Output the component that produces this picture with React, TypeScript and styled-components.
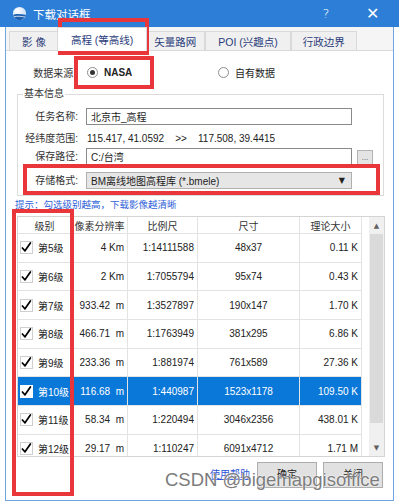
import React from 'react';
import styled, { createGlobalStyle } from 'styled-components';

const GlobalStyle = createGlobalStyle`
  html, body {
    margin: 0;
    padding: 0;
    background: #ffffff;
  }
  body {
    font-family: "Liberation Sans", "Noto Sans CJK SC", sans-serif;
    font-size: 10px;
    color: #1e1e1e;
  }
`;

const Window = styled.div`
  position: relative;
  width: 399px;
  height: 502px;
  display: flex;
  flex-direction: column;
  overflow: hidden;
`;

const TitleBar = styled.div`
  flex: none;
  height: 27px;
  background: #2c7ed6;
  color: #ffffff;
  display: flex;
  align-items: center;
  padding: 0 4px 0 12px;
`;

const Title = styled.span`
  flex: 1;
  margin-left: 6px;
  font-size: 11.5px;
`;

const TitleButton = styled.span<{ $size: number }>`
  width: 46px;
  text-align: center;
  font-size: ${({ $size }) => $size}px;
  font-family: "DejaVu Sans", sans-serif;
  font-weight: 300;
`;

const Frame = styled.div`
  flex: 1;
  margin: 0 5px 1px;
  border: 1px solid #6ea6e2;
  border-top: none;
  background: #ffffff;
  display: flex;
  flex-direction: column;
`;

const TabStrip = styled.div`
  flex: none;
  height: 23px;
  background: #f5f5f5;
  display: flex;
  align-items: flex-end;
  padding-left: 3px;
`;

const Tab = styled.div<{ $active?: boolean; $pad: number }>`
  position: relative;
  height: ${({ $active }) => ($active ? 24 : 20)}px;
  margin: 0 ${({ $active }) => ($active ? -2 : 0)}px -1px;
  z-index: ${({ $active }) => ($active ? 1 : 0)};
  padding: 0 ${({ $pad }) => $pad}px;
  display: flex;
  align-items: center;
  box-sizing: border-box;
  background: ${({ $active }) => ($active ? '#ffffff' : '#f0f0f0')};
  border: 1px solid #d9d9d9;
  border-bottom: ${({ $active }) => ($active ? 'none' : '1px solid #d9d9d9')};
  color: #2a3c7a;
  font-size: 10.5px;
  white-space: pre;
`;

const Panel = styled.div`
  flex: 1;
  background: #ffffff;
  border-top: 1px solid #d9d9d9;
  display: flex;
  flex-direction: column;
`;

const SourceRow = styled.div`
  margin-top: 11px;
  height: 20px;
  display: grid;
  grid-template-columns: 70px 133px auto;
  align-items: center;
`;

const FieldLabel = styled.span`
  text-align: right;
  color: #333333;
  white-space: nowrap;
`;

const RadioOption = styled.label<{ $indent: number }>`
  display: flex;
  align-items: center;
  gap: 6px;
  margin-left: ${({ $indent }) => $indent}px;
`;

const RadioDot = styled.span<{ $checked?: boolean }>`
  width: 11px;
  height: 11px;
  box-sizing: border-box;
  border-radius: 50%;
  border: 1px solid #8d8d8d;
  background: #ffffff;
  display: flex;
  align-items: center;
  justify-content: center;

  &::after {
    content: '';
    width: 5px;
    height: 5px;
    border-radius: 50%;
    background: ${({ $checked }) => ($checked ? '#333333' : 'transparent')};
  }
`;

const OptionText = styled.span<{ $bold?: boolean }>`
  font-weight: ${({ $bold }) => ($bold ? 700 : 400)};
  color: #222222;
`;

const GroupBox = styled.fieldset`
  margin: 6px 9px 0 11px;
  padding: 8px 0 6px;
  border: 1px solid #dcdcdc;
  min-width: 0;
  display: grid;
  grid-template-columns: 68px 266px 21px;
  grid-template-rows: 17px 23px 17px 24px;
`;

const Legend = styled.legend`
  margin-left: 5px;
  padding: 0 1px;
  font-size: 10px;
  line-height: 12px;
  color: #333333;
`;

const GroupLabel = styled(FieldLabel)<{ $row: number }>`
  grid-column: 1;
  grid-row: ${({ $row }) => $row};
  align-self: ${({ $row }) => ($row === 4 ? 'end' : 'center')};
  padding-right: 8px;
  padding-top: ${({ $row }) => ($row === 2 ? 3 : 0)}px;
  line-height: 17px;
`;

const TextBox = styled.div<{ $row: number }>`
  grid-column: 2;
  grid-row: ${({ $row }) => $row};
  height: 17px;
  box-sizing: border-box;
  border: 1px solid #8a8a8a;
  background: #ffffff;
  padding: 0 4px;
  display: flex;
  align-items: center;
`;

const RangeText = styled.div`
  grid-column: 2 / 4;
  grid-row: 2;
  align-self: center;
  padding-top: 3px;
  padding-left: 1px;
  color: #222222;
  white-space: pre;
`;

const BrowseButton = styled.div`
  grid-column: 3;
  grid-row: 3;
  margin-left: 5px;
  margin-top: 2px;
  height: 15px;
  box-sizing: border-box;
  border: 1px solid #b4b4b4;
  background: #e4e4e4;
  color: #555555;
  font-size: 8px;
  display: flex;
  align-items: center;
  justify-content: center;
`;

const SelectBox = styled.div`
  grid-column: 2;
  grid-row: 4;
  align-self: end;
  height: 17px;
  box-sizing: border-box;
  border: 1px solid #b0b0b0;
  background: #e6e6e6;
  padding: 0 6px 0 4px;
  display: flex;
  align-items: center;
  justify-content: space-between;
  color: #222222;
`;

const SelectArrow = styled.span`
  font-size: 8px;
  font-family: "DejaVu Sans", sans-serif;
`;

const Hint = styled.div`
  margin: 3px 0 0 9px;
  line-height: 12px;
  font-size: 9.5px;
  color: #2f62d8;
`;

const TableFrame = styled.div`
  margin: 5px 0 0 11px;
  width: 368px;
  height: 241px;
  box-sizing: border-box;
  border: 1px solid #d4d4d4;
  display: flex;
`;

const TableView = styled.div`
  flex: 1;
  overflow: hidden;
`;

const GridRow = styled.div<{ $height: number; $selected?: boolean }>`
  display: grid;
  grid-template-columns: 54px 56px 70px 102px 62px;
  width: 344px;
  height: ${({ $height }) => $height}px;
  background: ${({ $selected }) => ($selected ? '#0a78d8' : '#ffffff')};
  color: ${({ $selected }) => ($selected ? '#ffffff' : '#222222')};
`;

const Cell = styled.div<{ $align: 'left' | 'center' | 'right'; $header?: boolean }>`
  display: flex;
  align-items: center;
  justify-content: ${({ $align }) =>
    $align === 'left' ? 'flex-start' : $align === 'right' ? 'flex-end' : 'center'};
  padding: 0 ${({ $align }) => ($align === 'right' ? 3 : 0)}px 0 ${({ $align }) => ($align === 'left' ? 2 : 0)}px;
  border-right: 1px solid #e3e3e3;
  border-bottom: 1px solid #e3e3e3;
  color: ${({ $header }) => ($header ? '#333333' : 'inherit')};
  white-space: pre;
  overflow: hidden;
`;

const LevelText = styled.span`
  margin-left: 5px;
`;

const ScrollBar = styled.div`
  width: 15px;
  background: #f0f0f0;
  display: flex;
  flex-direction: column;
  align-items: stretch;
`;

const ScrollArrow = styled.div`
  height: 17px;
  display: flex;
  align-items: center;
  justify-content: center;
  color: #606060;
  font-size: 7px;
  font-family: "DejaVu Sans", sans-serif;
`;

const ScrollThumb = styled.div`
  flex: 1;
  margin: 0 1px;
  background: #dadada;
`;

const ScrollTrack = styled.div`
  height: 16px;
`;

const Footer = styled.div`
  margin: 5px 10px 0 0;
  height: 27px;
  display: flex;
  justify-content: flex-end;
  align-items: flex-start;
`;

const HelpLink = styled.span`
  margin: 4px 7px 0 0;
  color: #2b52d6;
  text-decoration: underline;
`;

const DialogButton = styled.div<{ $gap: number }>`
  width: 60px;
  height: 26px;
  box-sizing: border-box;
  margin-left: ${({ $gap }) => $gap}px;
  border: 1px solid #adadad;
  background: #e1e1e1;
  display: flex;
  justify-content: center;
  padding-top: 3px;
  color: #222222;
`;

const Watermark = styled.div`
  position: absolute;
  left: 165px;
  top: 469px;
  font-family: "Liberation Sans", sans-serif;
  font-size: 18.5px;
  color: #7c7c7c;
  text-shadow: 0 0 2px #ffffff, 0 0 1px #ffffff;
  white-space: nowrap;
`;

const Marker = styled.div<{ $x: number; $y: number; $w: number; $h: number }>`
  position: absolute;
  left: ${({ $x }) => $x}px;
  top: ${({ $y }) => $y}px;
  width: ${({ $w }) => $w}px;
  height: ${({ $h }) => $h}px;
  box-sizing: border-box;
  border: 4px solid #e8363b;
  pointer-events: none;
`;

const AppIcon = () => (
  <svg width="15" height="15" viewBox="0 0 16 16">
    <defs>
      <radialGradient id="g" cx="0.35" cy="0.3" r="0.8">
        <stop offset="0" stopColor="#ffffff" />
        <stop offset="1" stopColor="#bcd8f5" />
      </radialGradient>
    </defs>
    <circle cx="8" cy="8" r="7" fill="url(#g)" />
    <path d="M1.3 9.5 C4 8 10 8.5 14.8 9.6 C14 12.8 11 15 8 15 C4.7 15 2 12.7 1.3 9.5 Z" fill="#1d5fae" />
    <path d="M2 11.5 C5 10.5 10 11 14 11.8" stroke="#ffffff" strokeWidth="0.8" fill="none" />
  </svg>
);

const CheckMark = ({ onBlue }: { onBlue?: boolean }) => (
  <svg width="13" height="13" viewBox="0 0 13 13">
    <rect x="0.5" y="0.5" width="12" height="12" fill="#ffffff" stroke={onBlue ? '#ffffff' : '#cfcfcf'} />
    <path d="M2.4 7 L5 9.8 L10.4 2" stroke="#000000" strokeWidth="1.7" fill="none" strokeLinecap="round" strokeLinejoin="round" />
  </svg>
);

const TABS = [
  { label: '影 像', pad: 12 },
  { label: '高程 (等高线)', pad: 13, active: true },
  { label: '矢量路网', pad: 8 },
  { label: 'POI (兴趣点)', pad: 12 },
  { label: '行政边界', pad: 11 },
];

const LEVELS = [
  { level: '第5级', res: '4 Km', scale: '1:14111588', size: '48x37', bytes: '0.11 K' },
  { level: '第6级', res: '2 Km', scale: '1:7055794', size: '95x74', bytes: '0.43 K' },
  { level: '第7级', res: '933.42  m', scale: '1:3527897', size: '190x147', bytes: '1.70 K' },
  { level: '第8级', res: '466.71  m', scale: '1:1763949', size: '381x295', bytes: '6.86 K' },
  { level: '第9级', res: '233.36  m', scale: '1:881974', size: '761x589', bytes: '27.36 K' },
  { level: '第10级', res: '116.68  m', scale: '1:440987', size: '1523x1178', bytes: '109.50 K', selected: true },
  { level: '第11级', res: '58.34  m', scale: '1:220494', size: '3046x2356', bytes: '438.01 K' },
  { level: '第12级', res: '29.17  m', scale: '1:110247', size: '6091x4712', bytes: '1.71 M' },
];

export default function App() {
  return (
    <>
      <GlobalStyle />
      <Window>
        <TitleBar>
          <AppIcon />
          <Title>下载对话框</Title>
          <TitleButton $size={13}>?</TitleButton>
          <TitleButton $size={16}>✕</TitleButton>
        </TitleBar>

        <Frame>
          <TabStrip>
            {TABS.map((tab) => (
              <Tab key={tab.label} $active={tab.active} $pad={tab.pad}>
                {tab.label}
              </Tab>
            ))}
          </TabStrip>

          <Panel>
            <SourceRow>
              <FieldLabel>数据来源:</FieldLabel>
              <RadioOption $indent={11}>
                <RadioDot $checked />
                <OptionText $bold>NASA</OptionText>
              </RadioOption>
              <RadioOption $indent={9}>
                <RadioDot />
                <OptionText>自有数据</OptionText>
              </RadioOption>
            </SourceRow>

            <GroupBox>
              <Legend>基本信息</Legend>
              <GroupLabel $row={1}>任务名称:</GroupLabel>
              <TextBox $row={1}>北京市_高程</TextBox>
              <GroupLabel $row={2}>经纬度范围:</GroupLabel>
              <RangeText>{'115.417, 41.0592    >>    117.508, 39.4415'}</RangeText>
              <GroupLabel $row={3}>保存路径:</GroupLabel>
              <TextBox $row={3}>C:/台湾</TextBox>
              <BrowseButton>...</BrowseButton>
              <GroupLabel $row={4}>存储格式:</GroupLabel>
              <SelectBox>
                <span>BM离线地图高程库 (*.bmele)</span>
                <SelectArrow>▼</SelectArrow>
              </SelectBox>
            </GroupBox>

            <Hint>提示：勾选级别越高，下载影像越清晰</Hint>

            <TableFrame>
              <TableView>
                <GridRow $height={17}>
                  <Cell $align="center" $header>级别</Cell>
                  <Cell $align="center" $header>像素分辨率</Cell>
                  <Cell $align="center" $header>比例尺</Cell>
                  <Cell $align="center" $header>尺寸</Cell>
                  <Cell $align="center" $header>理论大小</Cell>
                </GridRow>
                {LEVELS.map((row) => (
                  <GridRow key={row.level} $height={28.7} $selected={row.selected}>
                    <Cell $align="left">
                      <CheckMark onBlue={row.selected} />
                      <LevelText>{row.level}</LevelText>
                    </Cell>
                    <Cell $align="right">{row.res}</Cell>
                    <Cell $align="right">{row.scale}</Cell>
                    <Cell $align="center">{row.size}</Cell>
                    <Cell $align="right">{row.bytes}</Cell>
                  </GridRow>
                ))}
              </TableView>
              <ScrollBar>
                <ScrollArrow>▲</ScrollArrow>
                <ScrollThumb />
                <ScrollTrack />
                <ScrollArrow>▼</ScrollArrow>
              </ScrollBar>
            </TableFrame>

            <Footer>
              <HelpLink>使用帮助</HelpLink>
              <DialogButton $gap={0}>确定</DialogButton>
              <DialogButton $gap={6}>关闭</DialogButton>
            </Footer>
          </Panel>
        </Frame>

        <Watermark>CSDN @bigemapgisoffice</Watermark>

        <Marker $x={58} $y={18} $w={91} $h={37} />
        <Marker $x={74} $y={56} $w={80} $h={33} />
        <Marker $x={23} $y={164} $w={357} $h={31} />
        <Marker $x={12} $y={209} $w={62} $h={287} />
      </Window>
    </>
  );
}
